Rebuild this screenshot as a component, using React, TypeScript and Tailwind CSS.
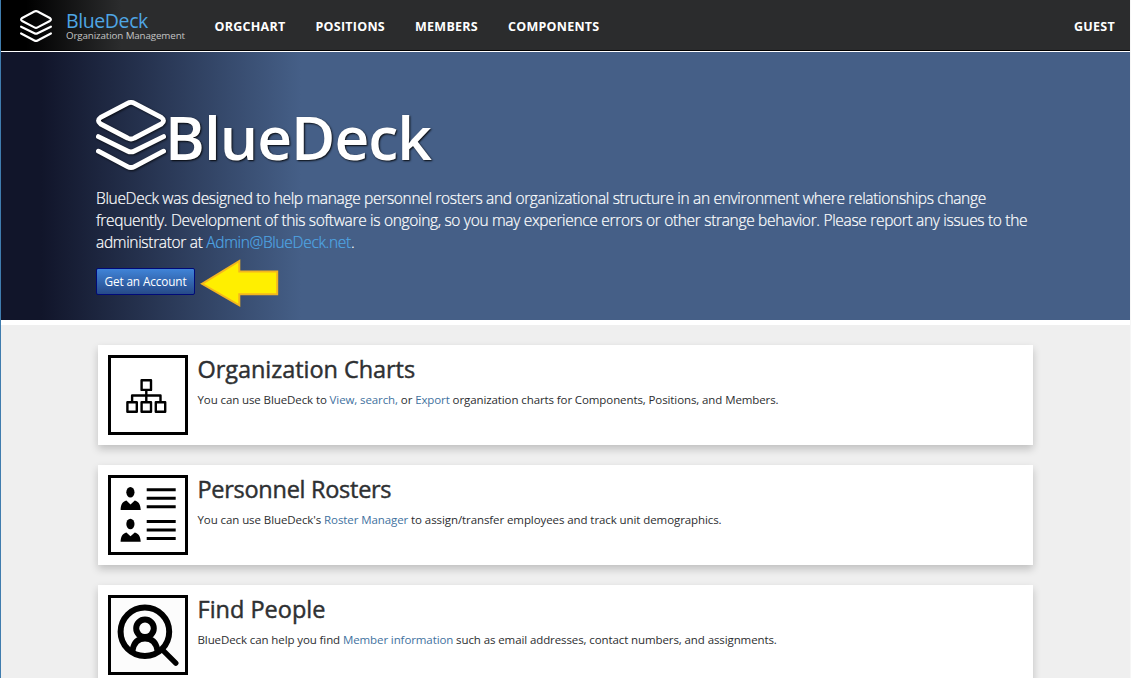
import type { ReactNode } from "react";

function DeckLogo({ className }: { className: string }) {
  return (
    <svg viewBox="0 0 70 70" className={className} fill="none" stroke="#fff" strokeWidth="4.8" strokeLinecap="round" strokeLinejoin="round">
      <path d="M31.5 3.3Q35 1.5 38.5 3.3L65.3 17.4Q69.8 20.7 65.3 24L38.5 38Q35 40 31.5 38L4.7 24Q.2 20.7 4.7 17.4Z" />
      <path d="M2.4 36.6L31.5 51Q35 52.8 38.5 51L67.6 36.6" />
      <path d="M2.4 51.2L31.5 66.6Q35 68.4 38.5 66.6L67.6 51.2" />
    </svg>
  );
}

function OrgIcon() {
  return (
    <svg viewBox="0 0 80 80" className="size-full" fill="none" stroke="#000" strokeWidth="2.4" strokeLinejoin="round">
      <rect x="33.6" y="25.3" width="9.4" height="9.6" />
      <rect x="19.4" y="47.2" width="9.4" height="9.6" />
      <rect x="33.6" y="47.2" width="9.4" height="9.6" />
      <rect x="47.8" y="47.2" width="9.4" height="9.6" />
      <path d="M38.3 35V47M24.1 47V40.5H52.5V47" />
    </svg>
  );
}

function RosterEntry({ y }: { y: number }) {
  return (
    <g transform={`translate(0 ${y})`}>
      <ellipse cx="22.4" cy="17.2" rx="4.1" ry="5.2" />
      <path d="M12.6 35C12.8 29.5 14.5 26.8 18.4 25.6L22.5 29.4L26.8 25.6C30.7 26.8 32.4 29.5 32.7 35Z" />
      <path d="M38.7 13.2H67.7V16.2H38.7ZM38.7 21.7H67.7V24.7H38.7ZM38.7 30.2H67.7V33.2H38.7Z" />
    </g>
  );
}

function RosterIcon() {
  return (
    <svg viewBox="0 0 80 80" className="size-full" fill="#000">
      <RosterEntry y={0} />
      <RosterEntry y={31.8} />
    </svg>
  );
}

function FindIcon() {
  return (
    <svg viewBox="0 0 80 80" className="size-full bg-[#fcfcfc]" fill="none" stroke="#000" strokeWidth="6" strokeLinecap="round">
      <circle cx="36.9" cy="36.8" r="24.3" />
      <circle cx="37" cy="33.3" r="8.8" />
      <path d="M24.6 55C26 46.8 31 43.4 37 43.4C43 43.4 48 46.8 49.4 55" />
      <path d="M54.5 54.8L67.8 68.2" strokeWidth="5.4" />
    </svg>
  );
}

function Card({ icon, title, titleClass, textClass, children }: { icon: ReactNode; title: string; titleClass: string; textClass: string; children: ReactNode }) {
  return (
    <section className="flex h-[100px] shrink-0 bg-white p-[10px] shadow-[0_4px_8px_0_rgba(0,0,0,0.2)]">
      <div className="size-20 shrink-0 bg-white outline-[3px] -outline-offset-[3px] outline-black">{icon}</div>
      <div className="pl-[9.5px]">
        <h2 className={`-mt-px text-[23.5px] leading-[30px] font-medium whitespace-nowrap text-[#2e3032] [-webkit-text-stroke:0.45px_#2e3032] ${titleClass}`}>{title}</h2>
        <p className={`mt-[7px] text-[11.5px] leading-[18px] whitespace-nowrap text-[#2c2e30] ${textClass}`}>{children}</p>
      </div>
    </section>
  );
}

function Link({ children }: { children: ReactNode }) {
  return <a href="#" className="text-[#3f72a0]">{children}</a>;
}

export default function App() {
  return (
    <div className="flex h-[678px] w-[1131px] flex-col overflow-hidden border-r border-l border-r-[#f6f6f6] border-l-[#3f7cae] bg-[#efefef] font-['Open_Sans','Noto_Sans',sans-serif]">
      <header className="flex h-[51px] shrink-0 items-start border-b border-black bg-[linear-gradient(90deg,#000_0,#000_25px,#2b2c2d_120px)] text-white">
        <DeckLogo className="mt-[10px] ml-[19px] size-8 shrink-0" />
        <div className="mt-[11px] ml-[14px] w-[148px] shrink-0 whitespace-nowrap">
          <div className="text-[19.5px] leading-[20px] tracking-[-0.4px] text-[#4fa6e4]">BlueDeck</div>
          <div className="text-[9.8px] leading-[10px] tracking-[-0.13px] text-[#c4c4c4]">Organization Management</div>
        </div>
        <nav className="mt-[18px] ml-[0.5px] flex flex-1 gap-[30px] text-[12.5px] leading-[18px] font-bold tracking-[0.26px]">
          <a href="#">ORGCHART</a>
          <a href="#">POSITIONS</a>
          <a href="#">MEMBERS</a>
          <a href="#">COMPONENTS</a>
          <a href="#" className="mr-[15px] ml-auto">GUEST</a>
        </nav>
      </header>

      <main className="flex flex-1 flex-col">
        <section className="flex h-[274px] shrink-0 flex-col border-t border-b-[5px] border-white bg-[linear-gradient(90deg,#11152a_0,#11152a_40px,#455f87_300px)] pl-[95px] text-white">
          <div className="mt-12 flex h-[70px] items-center">
            <DeckLogo className="size-[70px] shrink-0 drop-shadow-[1px_1px_1px_rgba(0,0,0,0.7)]" />
            <h1 className="-ml-[1px] pt-[4px] text-[60.5px] leading-[70px] font-semibold tracking-[-1px] [text-shadow:1px_1px_2px_rgba(0,0,0,0.9)]">BlueDeck</h1>
          </div>
          <p className="mt-[17px] text-[15.5px] leading-[22px] font-light tracking-[-0.32px] whitespace-nowrap [-webkit-text-stroke:0.2px]">
            BlueDeck was designed to help manage personnel rosters and organizational structure in an environment where relationships change
            <br />
            frequently. Development of this software is ongoing, so you may experience errors or other strange behavior. Please report any issues to the
            <br />
            administrator at <a href="#" className="text-[#4fa6e4]">Admin@BlueDeck.net</a>.
          </p>
          <div className="mt-[6px] flex h-[49px] items-start">
            <button className="mt-[9px] h-[27px] w-[99px] shrink-0 rounded-[2px] border border-[#000a78] bg-[linear-gradient(#4084d8,#274a88)] text-[11.8px] leading-[25px] tracking-[-0.13px] whitespace-nowrap">Get an Account</button>
            <svg viewBox="0 0 79 49" className="ml-[5px] h-[49px] w-[79px]" fill="#ffef00" stroke="#f3b61f" strokeWidth="2">
              <path d="M2 24.8L39.3 2V12.6H77.2V35.2H39.3V46.3Z" />
            </svg>
          </div>
        </section>

        <div className="flex flex-col gap-5 px-[97px] pt-5">
          <Card icon={<OrgIcon />} title="Organization Charts" titleClass="tracking-[-0.05px]" textClass="tracking-[-0.1px]">
            You can use BlueDeck to <Link>View, search,</Link> or <Link>Export</Link> organization charts for Components, Positions, and Members.
          </Card>
          <Card icon={<RosterIcon />} title="Personnel Rosters" titleClass="tracking-[-0.28px]" textClass="tracking-[-0.085px]">
            You can use BlueDeck's <Link>Roster Manager</Link> to assign/transfer employees and track unit demographics.
          </Card>
          <Card icon={<FindIcon />} title="Find People" titleClass="tracking-normal" textClass="tracking-[-0.1px]">
            BlueDeck can help you find <Link>Member information</Link> such as email addresses, contact numbers, and assignments.
          </Card>
        </div>
      </main>
    </div>
  );
}
